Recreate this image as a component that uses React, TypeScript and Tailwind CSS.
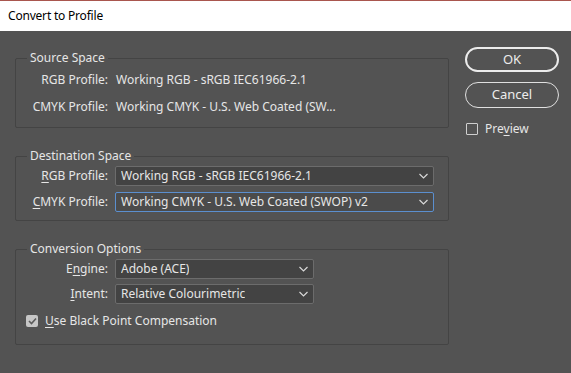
import React from 'react';

const font = { fontFamily: '"Noto Sans", "Liberation Sans", sans-serif' };

function Chevron() {
  return (
    <svg width="9" height="6" viewBox="0 0 9 6" className="shrink-0" aria-hidden>
      <polyline points="0.5,1 4.5,5 8.5,1" fill="none" stroke="#d8d8d8" strokeWidth="1.2" />
    </svg>
  );
}

function Select({ value, width, focused }: { value: string; width: string; focused?: boolean }) {
  return (
    <div
      className={`${width} h-[20px] flex items-center justify-between pl-[5px] pr-[5px] rounded-[2px] border ${
        focused ? 'border-[#5b8fcf] bg-[#4b4b4b]' : 'border-[#6c6c6c] bg-[#434343]'
      }`}
    >
      <span className="truncate">{value}</span>
      <Chevron />
    </div>
  );
}

function Group({ title, children, className = '' }: { title: string; children: React.ReactNode; className?: string }) {
  return (
    <fieldset className={`border border-[#444444] rounded-[2px] ${className}`}>
      <legend className="ml-[11px] px-[3px] leading-[16px]">{title}</legend>
      {children}
    </fieldset>
  );
}

function Label({ children }: { children: React.ReactNode }) {
  return <span className="w-[92px] shrink-0 text-right">{children}</span>;
}

export default function App() {
  return (
    <div className="w-[571px] h-[373px] flex flex-col bg-[#535353] text-[12px] text-[#e6e6e6] overflow-hidden" style={font}>
      <div className="h-[31px] shrink-0 bg-white border-t border-[#a9564e] flex items-center pl-[8px] text-[12px] tracking-[-0.2px] text-black">
        Convert to Profile
      </div>

      <div className="flex items-start pt-[16px]">
        <div className="w-[434px] ml-[15px] mt-[3px] flex flex-col gap-[20px]">
          <Group title="Source Space" className="pb-[11px]">
            <div className="flex flex-col gap-[9px] mt-[5px]">
              <div className="h-[18px] flex items-center gap-[8px]">
                <Label>RGB Profile:</Label>
                <span>Working RGB - sRGB IEC61966-2.1</span>
              </div>
              <div className="h-[18px] flex items-center gap-[8px]">
                <Label>CMYK Profile:</Label>
                <span>Working CMYK - U.S. Web Coated (SW...</span>
              </div>
            </div>
          </Group>

          <Group title="Destination Space" className="pb-[8px]">
            <div className="flex flex-col gap-[6px] mt-[2px]">
              <div className="flex items-center gap-[7px]">
                <Label>
                  <u className="underline-offset-2">R</u>GB Profile:
                </Label>
                <Select value="Working RGB - sRGB IEC61966-2.1" width="w-[319px]" />
              </div>
              <div className="flex items-center gap-[7px]">
                <Label>
                  <u className="underline-offset-2">C</u>MYK Profile:
                </Label>
                <Select value="Working CMYK - U.S. Web Coated (SWOP) v2" width="w-[319px]" focused />
              </div>
            </div>
          </Group>

          <Group title="Conversion Options" className="pb-[15px]">
            <div className="flex flex-col gap-[5px] mt-[2px]">
              <div className="flex items-center gap-[7px]">
                <Label>
                  E<u className="underline-offset-2">n</u>gine:
                </Label>
                <Select value="Adobe (ACE)" width="w-[199px]" />
              </div>
              <div className="flex items-center gap-[7px]">
                <Label>
                  <u className="underline-offset-2">I</u>ntent:
                </Label>
                <Select value="Relative Colourimetric" width="w-[199px]" />
              </div>
            </div>
            <div className="h-[16px] mt-[9px] pl-[10px] flex items-center gap-[7px]">
              <span className="w-[12px] h-[12px] rounded-[2px] bg-[#c6c6c6] flex items-center justify-center">
                <svg width="9" height="8" viewBox="0 0 9 8" aria-hidden>
                  <polyline points="1,4 3.5,6.5 8,1.5" fill="none" stroke="#5a5a5a" strokeWidth="1.6" />
                </svg>
              </span>
              <span>
                <u className="underline-offset-2">U</u>se Black Point Compensation
              </span>
            </div>
          </Group>
        </div>

        <div className="ml-[16px] w-[94px] flex flex-col">
          <button className="h-[25px] rounded-full border-2 border-[#ececec] text-[13px] text-[#ececec] flex items-center justify-center">
            OK
          </button>
          <button className="h-[26px] mt-[10px] rounded-full border border-[#e0e0e0] text-[13px] text-[#ececec] flex items-center justify-center">
            Cancel
          </button>
          <div className="mt-[15px] ml-[1px] flex items-center gap-[7px] h-[12px]">
            <span className="w-[12px] h-[12px] rounded-[1px] border border-[#cfcfcf]" />
            <span>
              Pre<u className="underline-offset-2">v</u>iew
            </span>
          </div>
        </div>
      </div>
    </div>
  );
}
